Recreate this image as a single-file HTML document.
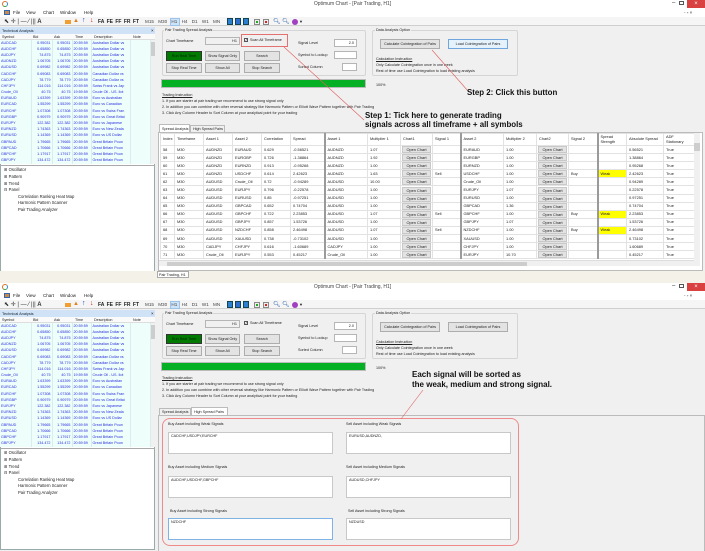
<!DOCTYPE html>
<html><head><meta charset="utf-8">
<style>
*{box-sizing:border-box}
body{margin:0;width:705px;height:551px;overflow:hidden;background:#f0f0f0;font-family:"Liberation Sans",sans-serif;font-size:3.7px;color:#222;position:relative}
.a{position:absolute;white-space:nowrap}
.win{position:absolute;left:0;width:705px;overflow:hidden;background:#f0f0f0}
.tb{background:#fff;left:0;width:705px}
.btn{position:absolute;background:#e3e3e3;border:1px solid #adadad;text-align:center;font-size:3.7px;line-height:8px}
.inp{position:absolute;background:#fff;border:1px solid #b5b5b5;font-size:3.8px;text-align:right;padding-right:2px;line-height:6px}
.grp{position:absolute;border:1px solid #d5d5d5;border-radius:2px}
table{border-collapse:collapse;table-layout:fixed;position:absolute}
.lt td{height:6.2px;font-size:3.7px;line-height:5px;padding:0 1px;color:#2b2be0;border-right:1px solid #d8eeee;overflow:hidden;white-space:nowrap;background:#eefffb}
.lt td.r{text-align:right}
.gt td{height:8.1px;font-size:3.9px;line-height:6px;padding:0 2px;border:1px solid #e2e2e2;background:#fff;overflow:hidden;white-space:nowrap}
.gt th{height:12px;font-size:3.9px;font-weight:normal;text-align:left;padding:0 2px;border:1px solid #e2e2e2;background:#fff;line-height:4.2px;overflow:hidden}
.gt .s{border-left:2px solid #9a9a9a}
.oc{display:block;background:#e3e3e3;border:1px solid #c8c8c8;text-align:center;line-height:5px;margin:0 -1px}
.wk{background:#ffff00!important}
.tree div{position:absolute;white-space:nowrap;font-size:4.2px}
.ann{position:absolute;white-space:nowrap;font-weight:bold;font-size:7.9px;color:#111;font-family:"Liberation Sans",sans-serif}
.hd{font-size:3.7px}
.mn{font-size:4.5px}
</style></head><body>

<!-- ============ TOP WINDOW ============ -->
<div class="win" style="top:0;height:283px">
 <div class="a tb" style="top:0;height:17px"></div>
 <div class="a" style="left:2px;top:1px;width:6px;height:6px;border-radius:50%;border:1.5px solid #e07020;border-right-color:#2a8be0;border-bottom-color:#3aa040"></div>
 <div class="a" style="left:0;width:705px;top:1px;text-align:center;font-size:5px;color:#444">Optimum Chart - [Pair Trading, H1]</div>
 <div class="a" style="left:672px;top:0;font-size:6px;color:#333">–</div>
 <div class="a" style="left:679px;top:1px;width:5px;height:4px;border:1px solid #555"></div>
 <div class="a" style="left:687px;top:0;width:18px;height:8px;background:#d94040;color:#fff;text-align:center;font-size:6px;line-height:8px">×</div>
 <div class="a" style="left:684px;top:10px;font-size:4.5px;color:#333">- ▫ ×</div>
 <div class="a" style="left:4px;top:10px;width:6px;height:5px;background:#c84;border:1px solid #36a"></div>
 <div class="a mn" style="left:13px;top:10px">File</div>
 <div class="a mn" style="left:26px;top:10px">View</div>
 <div class="a mn" style="left:43px;top:10px">Chart</div>
 <div class="a mn" style="left:60px;top:10px">Window</div>
 <div class="a mn" style="left:84px;top:10px">Help</div>
 <div class="a" style="left:0;top:17px;width:705px;height:9px;background:#f5f5f5;border-bottom:1px solid #cfcfcf"></div>
 <div class="a" style="left:4px;top:18px;font-size:6px;color:#333">⬉ ✛ | — ⁄ ||| <b>A</b></div>
 <div class="a" style="left:65px;top:20px;width:6px;height:4px;background:#f0a030"></div>
 <div class="a" style="left:73px;top:18px;font-size:6px;color:#e08020">▲</div>
 <div class="a" style="left:82px;top:17px;font-size:7px;color:#1a3ad0">↑</div>
 <div class="a" style="left:90px;top:17px;font-size:7px;color:#d01a1a">↓</div>
 <div class="a" style="left:98px;top:19px;font-size:5px;font-weight:bold;word-spacing:1px">FA FE FF FR FT</div>
 <div class="a" style="left:170px;top:18px;width:10px;height:8px;background:#cfe3f7;border:1px solid #9cc3ea"></div>
 <div class="a" style="left:145px;top:19px;font-size:4.6px;color:#444;word-spacing:3px">M15 M30 H1 H4 D1 W1 MN</div>
 <div class="a" style="left:227px;top:18px;width:6px;height:7px;background:#2d7fd0;border:1px solid #145"></div>
 <div class="a" style="left:235px;top:18px;width:6px;height:7px;background:#2d6fd0;border:1px solid #145"></div>
 <div class="a" style="left:243px;top:18px;width:6px;height:7px;background:#2d7fd0;border:1px solid #145"></div>
 <div class="a" style="left:254px;top:19px;width:6px;height:6px;background:#eee;border:1px solid #888"><div style="margin:1px;width:2px;height:2px;background:#2a2"></div></div>
 <div class="a" style="left:263px;top:19px;width:6px;height:6px;background:#eee;border:1px solid #888"><div style="margin:1px;width:2px;height:2px;background:#d22"></div></div>
 <div class="a" style="left:273px;top:18px;font-size:6px;color:#36a">🔍︎</div>
 <div class="a" style="left:282px;top:18px;font-size:6px;color:#36a">🔍︎</div>
 <div class="a" style="left:292px;top:19px;width:6px;height:6px;border-radius:50%;background:#a040c0"></div>
 <div class="a" style="left:299px;top:19px;font-size:4px">▼</div>

 <!-- left panel -->
 <div class="a" style="left:0;top:27px;width:155px;height:250px;background:#fff;border:1px solid #9aa"></div>
 <div class="a" style="left:0;top:27px;width:155px;height:7px;background:#cfe2f6;font-size:3.9px;line-height:7px;padding-left:2px;color:#123">Technical Analysis</div>
 <div class="a" style="left:151px;top:28px;font-size:4.5px">×</div>
 <div class="a hd" style="left:0;top:34px;width:155px;height:6px;background:#fafafa;border-bottom:1px solid #ddd;line-height:6px"><span class="a" style="left:2px">Symbol</span><span class="a" style="left:33px">Bid</span><span class="a" style="left:54px">Ask</span><span class="a" style="left:75px">Time</span><span class="a" style="left:94px">Description</span><span class="a" style="left:133px">Note</span></div>
 <div class="a" style="left:150px;top:40px;width:5px;height:124px;background:#f0f0f0"><div style="margin-top:2px;height:14px;background:#cdcdcd"></div></div>
 <table class="lt" style="left:0;top:40px;width:150px">
 <colgroup><col style="width:31px"><col style="width:21px"><col style="width:20px"><col style="width:19px"><col style="width:39px"><col style="width:20px"></colgroup>
 <tr><td>AUDCAD</td><td class="r">0.95031</td><td class="r">0.95031</td><td>20:59:59</td><td>Australian Dollar vs</td><td></td></tr>
 <tr><td>AUDCHF</td><td class="r">0.65850</td><td class="r">0.65850</td><td>20:59:59</td><td>Australian Dollar vs</td><td></td></tr>
 <tr><td>AUDJPY</td><td class="r">74.875</td><td class="r">74.875</td><td>20:59:59</td><td>Australian Dollar vs</td><td></td></tr>
 <tr><td>AUDNZD</td><td class="r">1.06705</td><td class="r">1.06705</td><td>20:59:59</td><td>Australian Dollar vs</td><td></td></tr>
 <tr><td>AUDUSD</td><td class="r">0.69982</td><td class="r">0.69982</td><td>20:59:59</td><td>Australian Dollar vs</td><td></td></tr>
 <tr><td>CADCHF</td><td class="r">0.69083</td><td class="r">0.69083</td><td>20:59:59</td><td>Canadian Dollar vs</td><td></td></tr>
 <tr><td>CADJPY</td><td class="r">78.779</td><td class="r">78.779</td><td>20:59:59</td><td>Canadian Dollar vs</td><td></td></tr>
 <tr><td>CHFJPY</td><td class="r">114.016</td><td class="r">114.016</td><td>20:59:59</td><td>Swiss Frank vs Jap</td><td></td></tr>
 <tr><td>Crude_Oil</td><td class="r">40.75</td><td class="r">40.75</td><td>19:59:59</td><td>Crude Oil - US. Ilot</td><td></td></tr>
 <tr><td>EURAUD</td><td class="r">1.63399</td><td class="r">1.63399</td><td>20:59:59</td><td>Euro vs Australian</td><td></td></tr>
 <tr><td>EURCAD</td><td class="r">1.55299</td><td class="r">1.55299</td><td>20:59:59</td><td>Euro vs Canadian</td><td></td></tr>
 <tr><td>EURCHF</td><td class="r">1.07308</td><td class="r">1.07308</td><td>20:59:59</td><td>Euro vs Swiss Fran</td><td></td></tr>
 <tr><td>EURGBP</td><td class="r">0.90979</td><td class="r">0.90979</td><td>20:59:59</td><td>Euro vs Great Britai</td><td></td></tr>
 <tr><td>EURJPY</td><td class="r">122.382</td><td class="r">122.382</td><td>20:59:59</td><td>Euro vs Japanese</td><td></td></tr>
 <tr><td>EURNZD</td><td class="r">1.74363</td><td class="r">1.74363</td><td>20:59:59</td><td>Euro vs New Zeala</td><td></td></tr>
 <tr><td>EURUSD</td><td class="r">1.14369</td><td class="r">1.14369</td><td>20:59:59</td><td>Euro vs US Dollar</td><td></td></tr>
 <tr><td>GBPAUD</td><td class="r">1.79665</td><td class="r">1.79665</td><td>20:59:59</td><td>Great Britain Poun</td><td></td></tr>
 <tr><td>GBPCAD</td><td class="r">1.70666</td><td class="r">1.70666</td><td>20:59:59</td><td>Great Britain Poun</td><td></td></tr>
 <tr><td>GBPCHF</td><td class="r">1.17917</td><td class="r">1.17917</td><td>20:59:59</td><td>Great Britain Poun</td><td></td></tr>
 <tr><td>GBPJPY</td><td class="r">134.472</td><td class="r">134.472</td><td>20:59:59</td><td>Great Britain Poun</td><td></td></tr>
 </table>
 <div class="a" style="left:0;top:165px;width:155px;height:1px;background:#aaa"></div>
 <div class="tree">
  <div style="left:4px;top:167px">⊞ Oscillator</div>
  <div style="left:4px;top:174px">⊞ Pattern</div>
  <div style="left:4px;top:181px">⊞ Trend</div>
  <div style="left:4px;top:187px">⊟ Panel</div>
  <div style="left:18px;top:194px">Correlation Ranking Heat Map</div>
  <div style="left:18px;top:200px">Harmonic Pattern Scanner</div>
  <div style="left:18px;top:207px">Pair Trading Analyzer</div>
 </div>

 <!-- right content -->
 <div class="grp" style="left:162px;top:30px;width:204px;height:46px"></div>
 <div class="a" style="left:164px;top:28px;background:#f0f0f0;padding:0 1px">Pair Trading Spread Analysis</div>
 <div class="a" style="left:166px;top:39px">Chart Timeframe</div>
 <div class="inp" style="left:205px;top:37px;width:35px;height:8px;background:#f0f0f0">H1</div>
 <div class="a" style="left:241px;top:34px;width:47px;height:13px;border:1px solid #e57070"></div>
 <div class="a" style="left:244px;top:38px;width:4px;height:4px;border:1px solid #555;background:#fff;font-size:3.5px;line-height:3px;text-align:center">✓</div>
 <div class="a" style="left:250px;top:38px">Scan All Timeframe</div>
 <div class="btn" style="left:166px;top:51px;width:36px;height:10px;background:#007a00;border-color:#333;color:#002000">Run Real Time</div>
 <div class="btn" style="left:205px;top:51px;width:35px;height:10px">Show Signal Only</div>
 <div class="btn" style="left:244px;top:51px;width:36px;height:10px">Search</div>
 <div class="btn" style="left:166px;top:63px;width:36px;height:10px">Stop Real Time</div>
 <div class="btn" style="left:205px;top:63px;width:35px;height:10px">Show All</div>
 <div class="btn" style="left:244px;top:63px;width:36px;height:10px">Stop Search</div>
 <div class="a" style="left:298px;top:41px">Signal Level</div>
 <div class="inp" style="left:334px;top:39px;width:23px;height:8px">2.0</div>
 <div class="a" style="left:298px;top:53px">Symbol to Lookup</div>
 <div class="inp" style="left:334px;top:51px;width:23px;height:8px"></div>
 <div class="a" style="left:298px;top:65px">Sorted Column</div>
 <div class="inp" style="left:342px;top:63px;width:15px;height:8px"></div>
 <div class="grp" style="left:372px;top:30px;width:146px;height:46px"></div>
 <div class="a" style="left:375px;top:28px;background:#f0f0f0;padding:0 1px">Data Analysis Option</div>
 <div class="btn" style="left:380px;top:39px;width:60px;height:10px">Calculate Cointegration of Pairs</div>
 <div class="btn" style="left:448px;top:39px;width:60px;height:10px;border-color:#6fa7dc;background:#e5f1fb">Load Cointegration of Pairs</div>
 <div class="a" style="left:376px;top:57px;text-decoration:underline">Calculation Instruction</div>
 <div class="a" style="left:376px;top:63px">Only Calculate Cointegration once in one week</div>
 <div class="a" style="left:376px;top:69px">Rest of time use Load Cointegration to load existing analysis</div>
 <div class="a" style="left:161px;top:79px;width:205px;height:9px;background:#06b025;border:1px solid #bbb"></div>
 <div class="a" style="left:376px;top:83px">100%</div>
 <div class="a" style="left:162px;top:93px;text-decoration:underline">Trading Instruction</div>
 <div class="a" style="left:162px;top:99px">1. If you are starter at pair trading we recommend to use strong signal only</div>
 <div class="a" style="left:162px;top:105px">2. In addition you can combine with other reversal strategy like Harmonic Pattern or Elliott Wave Pattern together with Pair Trading</div>
 <div class="a" style="left:162px;top:111px">3. Click Any Column Header to Sort Column at your analytical point for your trading</div>
 <div class="a" style="left:159px;top:124px;width:31px;height:9px;background:#fff;border:1px solid #bbb;border-bottom:none;font-size:3.7px;line-height:8px;padding-left:2px">Spread Analysis</div>
 <div class="a" style="left:190px;top:125px;width:35px;height:7px;background:#f0f0f0;border:1px solid #bbb;border-bottom:none;font-size:3.7px;line-height:7px;padding-left:2px">High Spread Pairs</div>
 <div class="a" style="left:158px;top:132px;width:545px;height:139px;background:#fff;border:1px solid #bbb"></div>
 <table class="gt" style="left:160px;top:133px;width:534px">
 <colgroup><col style="width:14px"><col style="width:29px"><col style="width:29px"><col style="width:29px"><col style="width:29px"><col style="width:34px"><col style="width:43px"><col style="width:33px"><col style="width:32px"><col style="width:28px"><col style="width:43px"><col style="width:33px"><col style="width:32px"><col style="width:29px"><col style="width:29px"><col style="width:37px"><col style="width:31px"></colgroup>
 <tr><th>Index</th><th>Timeframe</th><th>Asset 1</th><th>Asset 2</th><th>Correlation</th><th>Spread</th><th class="s">Asset 1</th><th>Multiplier 1</th><th>Chart1</th><th>Signal 1</th><th class="s">Asset 2</th><th>Multiplier 2</th><th>Chart2</th><th>Signal 2</th><th class="s">Spread Strength</th><th>Absolute Spread</th><th>ADF Stationary</th></tr>
 <tr><td>58</td><td>M30</td><td>AUDNZD</td><td>EURAUD</td><td>0.629</td><td>-0.56521</td><td class="s">AUDNZD</td><td>1.07</td><td><span class="oc">Open Chart</span></td><td></td><td class="s">EURAUD</td><td>1.00</td><td><span class="oc">Open Chart</span></td><td></td><td class="s"></td><td>0.56521</td><td>True</td></tr>
 <tr><td>59</td><td>M30</td><td>AUDNZD</td><td>EURGBP</td><td>0.726</td><td>-1.38864</td><td class="s">AUDNZD</td><td>1.92</td><td><span class="oc">Open Chart</span></td><td></td><td class="s">EURGBP</td><td>1.00</td><td><span class="oc">Open Chart</span></td><td></td><td class="s"></td><td>1.38864</td><td>True</td></tr>
 <tr><td>60</td><td>M30</td><td>AUDNZD</td><td>EURNZD</td><td>0.913</td><td>-0.95268</td><td class="s">AUDNZD</td><td>1.00</td><td><span class="oc">Open Chart</span></td><td></td><td class="s">EURNZD</td><td>1.00</td><td><span class="oc">Open Chart</span></td><td></td><td class="s"></td><td>0.95268</td><td>True</td></tr>
 <tr><td>61</td><td>M30</td><td>AUDNZD</td><td>USDCHF</td><td>0.614</td><td>2.42623</td><td class="s">AUDNZD</td><td>1.63</td><td><span class="oc">Open Chart</span></td><td>Sell</td><td class="s">USDCHF</td><td>1.00</td><td><span class="oc">Open Chart</span></td><td>Buy</td><td class="s wk">Weak</td><td>2.42623</td><td>True</td></tr>
 <tr><td>62</td><td>M30</td><td>AUDUSD</td><td>Crude_Oil</td><td>0.72</td><td>-0.94289</td><td class="s">AUDUSD</td><td>10.00</td><td><span class="oc">Open Chart</span></td><td></td><td class="s">Crude_Oil</td><td>1.00</td><td><span class="oc">Open Chart</span></td><td></td><td class="s"></td><td>0.94289</td><td>True</td></tr>
 <tr><td>63</td><td>M30</td><td>AUDUSD</td><td>EURJPY</td><td>0.796</td><td>-0.22578</td><td class="s">AUDUSD</td><td>1.00</td><td><span class="oc">Open Chart</span></td><td></td><td class="s">EURJPY</td><td>1.07</td><td><span class="oc">Open Chart</span></td><td></td><td class="s"></td><td>0.22578</td><td>True</td></tr>
 <tr><td>64</td><td>M30</td><td>AUDUSD</td><td>EURUSD</td><td>0.85</td><td>-0.97251</td><td class="s">AUDUSD</td><td>1.00</td><td><span class="oc">Open Chart</span></td><td></td><td class="s">EURUSD</td><td>1.00</td><td><span class="oc">Open Chart</span></td><td></td><td class="s"></td><td>0.97251</td><td>True</td></tr>
 <tr><td>65</td><td>M30</td><td>AUDUSD</td><td>GBPCAD</td><td>0.652</td><td>0.74704</td><td class="s">AUDUSD</td><td>1.00</td><td><span class="oc">Open Chart</span></td><td></td><td class="s">GBPCAD</td><td>1.36</td><td><span class="oc">Open Chart</span></td><td></td><td class="s"></td><td>0.74704</td><td>True</td></tr>
 <tr><td>66</td><td>M30</td><td>AUDUSD</td><td>GBPCHF</td><td>0.722</td><td>2.23853</td><td class="s">AUDUSD</td><td>1.07</td><td><span class="oc">Open Chart</span></td><td>Sell</td><td class="s">GBPCHF</td><td>1.00</td><td><span class="oc">Open Chart</span></td><td>Buy</td><td class="s wk">Weak</td><td>2.23853</td><td>True</td></tr>
 <tr><td>67</td><td>M30</td><td>AUDUSD</td><td>GBPJPY</td><td>0.857</td><td>1.53726</td><td class="s">AUDUSD</td><td>1.00</td><td><span class="oc">Open Chart</span></td><td></td><td class="s">GBPJPY</td><td>1.07</td><td><span class="oc">Open Chart</span></td><td></td><td class="s"></td><td>1.53726</td><td>True</td></tr>
 <tr><td>68</td><td>M30</td><td>AUDUSD</td><td>NZDCHF</td><td>0.858</td><td>2.46498</td><td class="s">AUDUSD</td><td>1.07</td><td><span class="oc">Open Chart</span></td><td>Sell</td><td class="s">NZDCHF</td><td>1.00</td><td><span class="oc">Open Chart</span></td><td>Buy</td><td class="s wk">Weak</td><td>2.46498</td><td>True</td></tr>
 <tr><td>69</td><td>M30</td><td>AUDUSD</td><td>XAUUSD</td><td>0.738</td><td>-0.73102</td><td class="s">AUDUSD</td><td>1.00</td><td><span class="oc">Open Chart</span></td><td></td><td class="s">XAUUSD</td><td>1.00</td><td><span class="oc">Open Chart</span></td><td></td><td class="s"></td><td>0.73102</td><td>True</td></tr>
 <tr><td>70</td><td>M30</td><td>CADJPY</td><td>CHFJPY</td><td>0.616</td><td>-1.60689</td><td class="s">CADJPY</td><td>1.00</td><td><span class="oc">Open Chart</span></td><td></td><td class="s">CHFJPY</td><td>1.00</td><td><span class="oc">Open Chart</span></td><td></td><td class="s"></td><td>1.60689</td><td>True</td></tr>
 <tr><td>71</td><td>M30</td><td>Crude_Oil</td><td>EURJPY</td><td>0.553</td><td>0.45217</td><td class="s">Crude_Oil</td><td>1.00</td><td><span class="oc">Open Chart</span></td><td></td><td class="s">EURJPY</td><td>10.70</td><td><span class="oc">Open Chart</span></td><td></td><td class="s"></td><td>0.45217</td><td>True</td></tr>
 </table>
 <div class="a" style="left:159px;top:260px;width:535px;height:6px;background:#f0f0f0;border-top:1px solid #ddd"><div style="margin-left:8px;width:360px;height:4px;margin-top:1px;background:#cdcdcd"></div></div>
 <div class="a" style="left:694px;top:133px;width:6px;height:133px;background:#f0f0f0"><div style="margin-top:10px;height:8px;background:#cdcdcd"></div></div>
 <div class="a" style="left:0;top:271px;width:705px;height:12px;background:#f4f2e8"></div>
 <div class="a" style="left:157px;top:271px;width:32px;height:7px;background:#fff;border:1px solid #aaa;font-size:3.7px;line-height:6px;padding-left:1px">Pair Trading, H1</div>

 <!-- annotations -->
 <svg class="a" style="left:0;top:0" width="705" height="283"><line x1="284" y1="47" x2="364" y2="120" stroke="#e06060" stroke-width="0.6"/><line x1="432" y1="50" x2="468" y2="91" stroke="#e06060" stroke-width="0.6"/></svg>
 <div class="ann" style="left:467px;top:88px">Step 2: Click this button</div>
 <div class="ann" style="left:365px;top:111px">Step 1: Tick here to generate trading</div>
 <div class="ann" style="left:365px;top:120px">signals across all timeframe + all symbols</div>
</div>

<!-- ============ BOTTOM WINDOW ============ -->
<div class="win" style="top:283px;height:268px">
 <div class="a tb" style="top:0;height:17px"></div>
 <div class="a" style="left:2px;top:1px;width:6px;height:6px;border-radius:50%;border:1.5px solid #e07020;border-right-color:#2a8be0;border-bottom-color:#3aa040"></div>
 <div class="a" style="left:0;width:705px;top:1px;text-align:center;font-size:5px;color:#444">Optimum Chart - [Pair Trading, H1]</div>
 <div class="a" style="left:672px;top:0;font-size:6px;color:#333">–</div>
 <div class="a" style="left:679px;top:1px;width:5px;height:4px;border:1px solid #555"></div>
 <div class="a" style="left:687px;top:0;width:18px;height:8px;background:#d94040;color:#fff;text-align:center;font-size:6px;line-height:8px">×</div>
 <div class="a" style="left:684px;top:10px;font-size:4.5px;color:#333">- ▫ ×</div>
 <div class="a" style="left:4px;top:10px;width:6px;height:5px;background:#c84;border:1px solid #36a"></div>
 <div class="a mn" style="left:13px;top:10px">File</div>
 <div class="a mn" style="left:26px;top:10px">View</div>
 <div class="a mn" style="left:43px;top:10px">Chart</div>
 <div class="a mn" style="left:60px;top:10px">Window</div>
 <div class="a mn" style="left:84px;top:10px">Help</div>
 <div class="a" style="left:0;top:17px;width:705px;height:9px;background:#f5f5f5;border-bottom:1px solid #cfcfcf"></div>
 <div class="a" style="left:4px;top:18px;font-size:6px;color:#333">⬉ ✛ | — ⁄ ||| <b>A</b></div>
 <div class="a" style="left:65px;top:20px;width:6px;height:4px;background:#f0a030"></div>
 <div class="a" style="left:73px;top:18px;font-size:6px;color:#e08020">▲</div>
 <div class="a" style="left:82px;top:17px;font-size:7px;color:#1a3ad0">↑</div>
 <div class="a" style="left:90px;top:17px;font-size:7px;color:#d01a1a">↓</div>
 <div class="a" style="left:98px;top:19px;font-size:5px;font-weight:bold;word-spacing:1px">FA FE FF FR FT</div>
 <div class="a" style="left:170px;top:18px;width:10px;height:8px;background:#cfe3f7;border:1px solid #9cc3ea"></div>
 <div class="a" style="left:145px;top:19px;font-size:4.6px;color:#444;word-spacing:3px">M15 M30 H1 H4 D1 W1 MN</div>
 <div class="a" style="left:227px;top:18px;width:6px;height:7px;background:#2d7fd0;border:1px solid #145"></div>
 <div class="a" style="left:235px;top:18px;width:6px;height:7px;background:#2d6fd0;border:1px solid #145"></div>
 <div class="a" style="left:243px;top:18px;width:6px;height:7px;background:#2d7fd0;border:1px solid #145"></div>
 <div class="a" style="left:254px;top:19px;width:6px;height:6px;background:#eee;border:1px solid #888"><div style="margin:1px;width:2px;height:2px;background:#2a2"></div></div>
 <div class="a" style="left:263px;top:19px;width:6px;height:6px;background:#eee;border:1px solid #888"><div style="margin:1px;width:2px;height:2px;background:#d22"></div></div>
 <div class="a" style="left:273px;top:18px;font-size:6px;color:#36a">🔍︎</div>
 <div class="a" style="left:282px;top:18px;font-size:6px;color:#36a">🔍︎</div>
 <div class="a" style="left:292px;top:19px;width:6px;height:6px;border-radius:50%;background:#a040c0"></div>
 <div class="a" style="left:299px;top:19px;font-size:4px">▼</div>

 <div class="a" style="left:0;top:27px;width:155px;height:240px;background:#fff;border:1px solid #9aa"></div>
 <div class="a" style="left:0;top:27px;width:155px;height:7px;background:#cfe2f6;font-size:3.9px;line-height:7px;padding-left:2px;color:#123">Technical Analysis</div>
 <div class="a" style="left:151px;top:28px;font-size:4.5px">×</div>
 <div class="a hd" style="left:0;top:34px;width:155px;height:6px;background:#fafafa;border-bottom:1px solid #ddd;line-height:6px"><span class="a" style="left:2px">Symbol</span><span class="a" style="left:33px">Bid</span><span class="a" style="left:54px">Ask</span><span class="a" style="left:75px">Time</span><span class="a" style="left:94px">Description</span><span class="a" style="left:133px">Note</span></div>
 <div class="a" style="left:150px;top:40px;width:5px;height:124px;background:#f0f0f0"><div style="margin-top:2px;height:14px;background:#cdcdcd"></div></div>
 <table class="lt" style="left:0;top:40px;width:150px">
 <colgroup><col style="width:31px"><col style="width:21px"><col style="width:20px"><col style="width:19px"><col style="width:39px"><col style="width:20px"></colgroup>
 <tr><td>AUDCAD</td><td class="r">0.95031</td><td class="r">0.95031</td><td>20:59:59</td><td>Australian Dollar vs</td><td></td></tr>
 <tr><td>AUDCHF</td><td class="r">0.65850</td><td class="r">0.65850</td><td>20:59:59</td><td>Australian Dollar vs</td><td></td></tr>
 <tr><td>AUDJPY</td><td class="r">74.875</td><td class="r">74.875</td><td>20:59:59</td><td>Australian Dollar vs</td><td></td></tr>
 <tr><td>AUDNZD</td><td class="r">1.06705</td><td class="r">1.06705</td><td>20:59:59</td><td>Australian Dollar vs</td><td></td></tr>
 <tr><td>AUDUSD</td><td class="r">0.69982</td><td class="r">0.69982</td><td>20:59:59</td><td>Australian Dollar vs</td><td></td></tr>
 <tr><td>CADCHF</td><td class="r">0.69083</td><td class="r">0.69083</td><td>20:59:59</td><td>Canadian Dollar vs</td><td></td></tr>
 <tr><td>CADJPY</td><td class="r">78.779</td><td class="r">78.779</td><td>20:59:59</td><td>Canadian Dollar vs</td><td></td></tr>
 <tr><td>CHFJPY</td><td class="r">114.016</td><td class="r">114.016</td><td>20:59:59</td><td>Swiss Frank vs Jap</td><td></td></tr>
 <tr><td>Crude_Oil</td><td class="r">40.75</td><td class="r">40.75</td><td>19:59:59</td><td>Crude Oil - US. Ilot</td><td></td></tr>
 <tr><td>EURAUD</td><td class="r">1.63399</td><td class="r">1.63399</td><td>20:59:59</td><td>Euro vs Australian</td><td></td></tr>
 <tr><td>EURCAD</td><td class="r">1.55299</td><td class="r">1.55299</td><td>20:59:59</td><td>Euro vs Canadian</td><td></td></tr>
 <tr><td>EURCHF</td><td class="r">1.07308</td><td class="r">1.07308</td><td>20:59:59</td><td>Euro vs Swiss Fran</td><td></td></tr>
 <tr><td>EURGBP</td><td class="r">0.90979</td><td class="r">0.90979</td><td>20:59:59</td><td>Euro vs Great Britai</td><td></td></tr>
 <tr><td>EURJPY</td><td class="r">122.382</td><td class="r">122.382</td><td>20:59:59</td><td>Euro vs Japanese</td><td></td></tr>
 <tr><td>EURNZD</td><td class="r">1.74363</td><td class="r">1.74363</td><td>20:59:59</td><td>Euro vs New Zeala</td><td></td></tr>
 <tr><td>EURUSD</td><td class="r">1.14369</td><td class="r">1.14369</td><td>20:59:59</td><td>Euro vs US Dollar</td><td></td></tr>
 <tr><td>GBPAUD</td><td class="r">1.79665</td><td class="r">1.79665</td><td>20:59:59</td><td>Great Britain Poun</td><td></td></tr>
 <tr><td>GBPCAD</td><td class="r">1.70666</td><td class="r">1.70666</td><td>20:59:59</td><td>Great Britain Poun</td><td></td></tr>
 <tr><td>GBPCHF</td><td class="r">1.17917</td><td class="r">1.17917</td><td>20:59:59</td><td>Great Britain Poun</td><td></td></tr>
 <tr><td>GBPJPY</td><td class="r">134.472</td><td class="r">134.472</td><td>20:59:59</td><td>Great Britain Poun</td><td></td></tr>
 </table>
 <div class="a" style="left:0;top:165px;width:155px;height:1px;background:#aaa"></div>
 <div class="tree">
  <div style="left:4px;top:167px">⊞ Oscillator</div>
  <div style="left:4px;top:174px">⊞ Pattern</div>
  <div style="left:4px;top:181px">⊞ Trend</div>
  <div style="left:4px;top:187px">⊟ Panel</div>
  <div style="left:18px;top:194px">Correlation Ranking Heat Map</div>
  <div style="left:18px;top:200px">Harmonic Pattern Scanner</div>
  <div style="left:18px;top:207px">Pair Trading Analyzer</div>
 </div>

 <div class="grp" style="left:162px;top:30px;width:204px;height:46px"></div>
 <div class="a" style="left:164px;top:28px;background:#f0f0f0;padding:0 1px">Pair Trading Spread Analysis</div>
 <div class="a" style="left:166px;top:39px">Chart Timeframe</div>
 <div class="inp" style="left:205px;top:37px;width:35px;height:8px;background:#f0f0f0">H1</div>
 <div class="a" style="left:244px;top:38px;width:4px;height:4px;border:1px solid #555;background:#fff;font-size:3.5px;line-height:3px;text-align:center">✓</div>
 <div class="a" style="left:250px;top:38px">Scan All Timeframe</div>
 <div class="btn" style="left:166px;top:51px;width:36px;height:10px;background:#007a00;border-color:#333;color:#002000">Run Real Time</div>
 <div class="btn" style="left:205px;top:51px;width:35px;height:10px">Show Signal Only</div>
 <div class="btn" style="left:244px;top:51px;width:36px;height:10px">Search</div>
 <div class="btn" style="left:166px;top:63px;width:36px;height:10px">Stop Real Time</div>
 <div class="btn" style="left:205px;top:63px;width:35px;height:10px">Show All</div>
 <div class="btn" style="left:244px;top:63px;width:36px;height:10px">Stop Search</div>
 <div class="a" style="left:298px;top:41px">Signal Level</div>
 <div class="inp" style="left:334px;top:39px;width:23px;height:8px">2.0</div>
 <div class="a" style="left:298px;top:53px">Symbol to Lookup</div>
 <div class="inp" style="left:334px;top:51px;width:23px;height:8px"></div>
 <div class="a" style="left:298px;top:65px">Sorted Column</div>
 <div class="inp" style="left:342px;top:63px;width:15px;height:8px"></div>
 <div class="grp" style="left:372px;top:30px;width:146px;height:46px"></div>
 <div class="a" style="left:375px;top:28px;background:#f0f0f0;padding:0 1px">Data Analysis Option</div>
 <div class="btn" style="left:380px;top:39px;width:60px;height:10px">Calculate Cointegration of Pairs</div>
 <div class="btn" style="left:448px;top:39px;width:60px;height:10px">Load Cointegration of Pairs</div>
 <div class="a" style="left:376px;top:57px;text-decoration:underline">Calculation Instruction</div>
 <div class="a" style="left:376px;top:63px">Only Calculate Cointegration once in one week</div>
 <div class="a" style="left:376px;top:69px">Rest of time use Load Cointegration to load existing analysis</div>
 <div class="a" style="left:161px;top:79px;width:205px;height:9px;background:#06b025;border:1px solid #bbb"></div>
 <div class="a" style="left:376px;top:83px">100%</div>
 <div class="a" style="left:162px;top:93px;text-decoration:underline">Trading Instruction</div>
 <div class="a" style="left:162px;top:99px">1. If you are starter at pair trading we recommend to use strong signal only</div>
 <div class="a" style="left:162px;top:105px">2. In addition you can combine with other reversal strategy like Harmonic Pattern or Elliott Wave Pattern together with Pair Trading</div>
 <div class="a" style="left:162px;top:111px">3. Click Any Column Header to Sort Column at your analytical point for your trading</div>
 <div class="a" style="left:159px;top:125px;width:32px;height:7px;background:#f0f0f0;border:1px solid #bbb;border-bottom:none;font-size:3.7px;line-height:7px;padding-left:2px">Spread Analysis</div>
 <div class="a" style="left:191px;top:124px;width:37px;height:9px;background:#fff;border:1px solid #bbb;border-bottom:none;font-size:3.7px;line-height:8px;padding-left:2px">High Spread Pairs</div>
 <div class="a" style="left:158px;top:132px;width:547px;height:140px;background:#f0f0f0;border:1px solid #bbb"></div>
 <div class="a" style="left:162px;top:135px;width:357px;height:128px;border:1px solid #ee8a8a;border-radius:8px"></div>
 <div class="a" style="left:168px;top:139px">Buy Asset including Weak Signals</div>
 <div class="a" style="left:346px;top:139px">Sell Asset including Weak Signals</div>
 <div class="a" style="left:168px;top:149px;width:165px;height:22px;background:#fff;border:1px solid #c8c8c8;padding:1px 2px">CADCHF,USDJPY,EURCHF</div>
 <div class="a" style="left:346px;top:149px;width:165px;height:22px;background:#fff;border:1px solid #c8c8c8;padding:1px 2px">EURUSD,AUDNZD,</div>
 <div class="a" style="left:168px;top:182px">Buy Asset including Medium Signals</div>
 <div class="a" style="left:346px;top:182px">Sell Asset including Medium Signals</div>
 <div class="a" style="left:168px;top:193px;width:165px;height:22px;background:#fff;border:1px solid #c8c8c8;padding:1px 2px">AUDCHF,USDCHF,GBPCHF</div>
 <div class="a" style="left:346px;top:193px;width:165px;height:22px;background:#fff;border:1px solid #c8c8c8;padding:1px 2px">AUDUSD,CHFJPY</div>
 <div class="a" style="left:170px;top:226px">Buy Asset including Strong Signals</div>
 <div class="a" style="left:348px;top:226px">Sell Asset including Strong Signals</div>
 <div class="a" style="left:168px;top:235px;width:165px;height:22px;background:#fff;border:1px solid #7fb2e5;padding:1px 2px">NZDCHF</div>
 <div class="a" style="left:346px;top:235px;width:165px;height:22px;background:#fff;border:1px solid #c8c8c8;padding:1px 2px">NZDUSD</div>

 <svg class="a" style="left:0;top:0" width="705" height="268"><line x1="423" y1="107" x2="401" y2="136" stroke="#e06060" stroke-width="0.6"/></svg>
 <div class="ann" style="left:412px;top:87px;font-size:8px">Each signal will be sorted as</div>
 <div class="ann" style="left:412px;top:97px;font-size:8px">the weak, medium and strong signal.</div>
</div>
</body></html>
